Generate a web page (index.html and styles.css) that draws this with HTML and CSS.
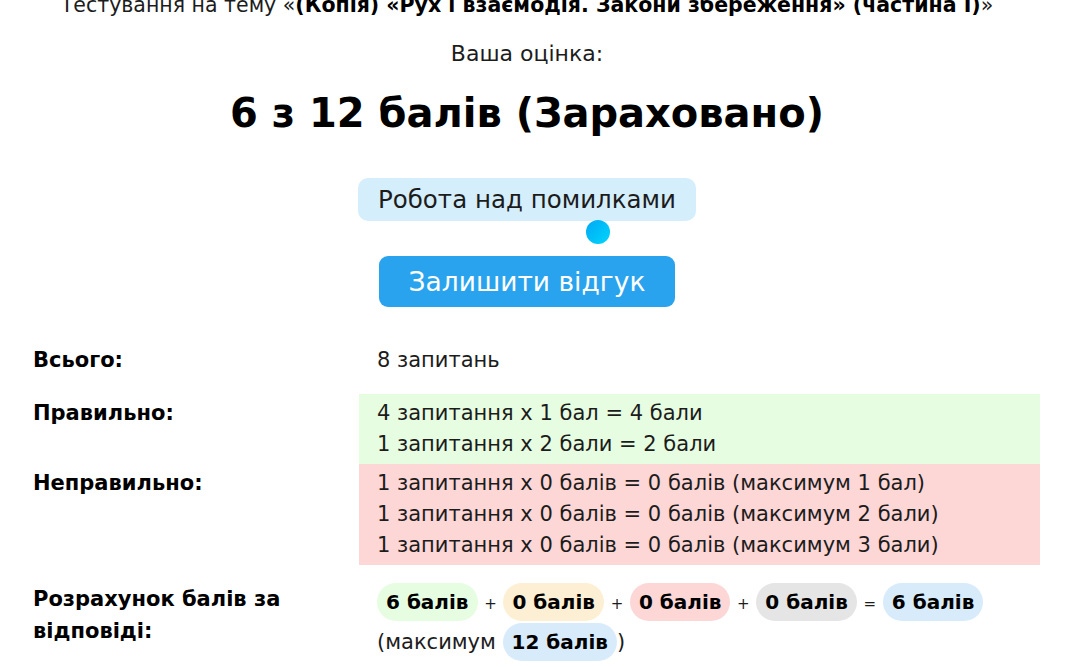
FILE: index.html
```html
<!DOCTYPE html>
<html lang="uk">
<head>
<meta charset="utf-8">
<link rel="stylesheet" href="styles.css">
</head>
<body>
<div class="page">
  <div class="head">
    <p class="topic">Тестування на тему «<b>(Копія) «Рух і взаємодія. Закони збереження» (частина I)</b>»</p>
    <p class="label-score">Ваша оцінка:</p>
    <h1 class="score">6 з 12 балів (Зараховано)</h1>
    <div class="actions">
      <span class="mistakes">Робота над помилками</span>
      <span class="dot"></span>
      <span class="feedback">Залишити відгук</span>
    </div>
  </div>
  <div class="stats">
    <div class="row r-total">
      <div class="key">Всього:</div>
      <div class="val">8 запитань</div>
    </div>
    <div class="row r-ok">
      <div class="key">Правильно:</div>
      <div class="val green">4 запитання x 1 бал = 4 бали<br>1 запитання x 2 бали = 2 бали</div>
    </div>
    <div class="row r-bad">
      <div class="key">Неправильно:</div>
      <div class="val red">1 запитання x 0 балів = 0 балів (максимум 1 бал)<br>1 запитання x 0 балів = 0 балів (максимум 2 бали)<br>1 запитання x 0 балів = 0 балів (максимум 3 бали)</div>
    </div>
    <div class="row calc">
      <div class="key">Розрахунок балів за відповіді:</div>
      <div class="val"><span class="pill p-green">6 балів</span> <span class="op">+</span> <span class="pill p-orange">0 балів</span> <span class="op">+</span> <span class="pill p-red">0 балів</span> <span class="op">+</span> <span class="pill p-gray">0 балів</span> <span class="op">=</span> <span class="pill p-blue">6 балів</span><br>(максимум <span class="pill p-blue">12 балів</span>)</div>
    </div>
  </div>
</div>
</body>
</html>
```
FILE: styles.css
```css
* { box-sizing: border-box; }
body {
  margin: 0;
  background: #fff;
  color: #1c1c1c;
  font-family: "DejaVu Sans", "Noto Sans", sans-serif;
  font-weight: 400;
}
.head {
  padding-right: 16px;
}
.topic {
  margin: -8px 0 0;
  text-align: center;
  font-size: 20.5px;
  line-height: 26px;
  white-space: nowrap;
  color: #1c1c1c;
}
.topic b { font-weight: 700; color: #000; }
.label-score {
  margin: 23px 0 0;
  text-align: center;
  font-size: 22px;
  line-height: 26px;
}
.score {
  margin: 21px 0 0;
  text-align: center;
  font-size: 40px;
  line-height: 50px;
  font-weight: 700;
  color: #000;
}
.actions {
  margin-top: 40px;
  display: flex;
  flex-direction: column;
  align-items: center;
}
.mistakes {
  background: #d5eefc;
  border-radius: 10px;
  padding: 0 20px;
  height: 43px;
  line-height: 43px;
  font-size: 24.5px;
}
.dot {
  width: 24px;
  height: 24px;
  border-radius: 50%;
  background: linear-gradient(135deg, #00a8f4, #00d6fc);
  margin: -1px 0 0 142px;
}
.feedback {
  margin-top: 12px;
  background: #2aa3ee;
  color: #fff;
  border-radius: 9px;
  height: 51px;
  line-height: 51px;
  padding: 0 30px;
  font-size: 26.5px;
}
.stats {
  margin-top: 38px;
  padding: 0 30px 0 33px;
  display: flex;
  flex-direction: column;
  gap: 18px;
}
.row {
  display: grid;
  grid-template-columns: 326px 1fr;
  font-size: 21px;
  line-height: 31px;
}
.key {
  font-weight: 700;
  color: #000;
}
.val {
  padding: 0 18px;
}
.r-bad { margin-top: -18px; }
.green, .red { padding-top: 4px; padding-bottom: 4px; }
.green { background: #e6fde1; }
.red { background: #fdd6d6; }
.r-ok .key, .r-bad .key { padding-top: 4px; }
.calc .key { line-height: 32px; max-width: 300px; }
.calc .val { line-height: 38px; }
.pill {
  display: inline-block;
  padding: 0 9px;
  border-radius: 19px;
  font-size: 20px;
  font-weight: 700;
  color: #000;
  line-height: 38px;
}
.op { font-size: 15px; }
.p-green { background: #e6fde1; }
.p-orange { background: #fdefd3; }
.p-red { background: #fdd6d6; }
.p-gray { background: #e5e5e5; }
.p-blue { background: #d8ebfb; }
```
